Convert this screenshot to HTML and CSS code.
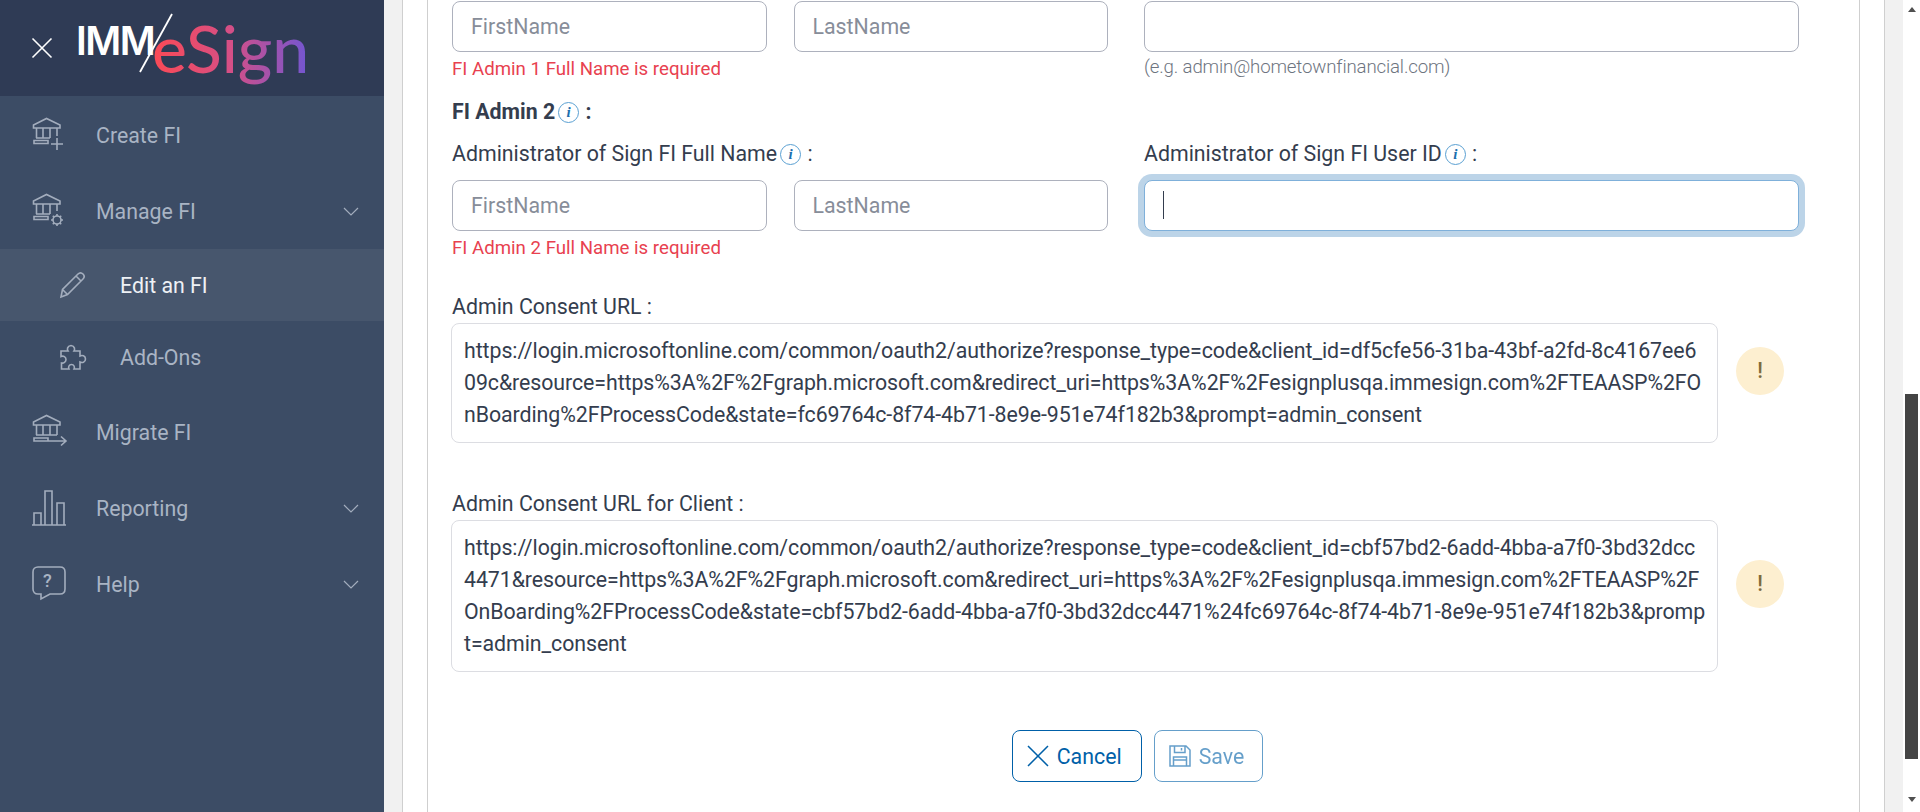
FILE: index.html
```html
<!DOCTYPE html>
<html>
<head>
  <title>Edit an FI | IMM eSign</title>
  <meta charset="utf-8">
  <link rel="stylesheet" href="styles.css">
</head>
<body>
  <div class="sidebar">
    <div class="brand">
      <svg class="brand-close" width="22" height="22" viewBox="0 0 22 22"><path d="M1.5 1.5L20.5 20.5M20.5 1.5L1.5 20.5"/></svg>
      <div class="logo">
        <span class="logo-imm">IMM</span>
        <svg class="logo-slash" width="36" height="60" viewBox="0 0 36 60"><path d="M34 1L2 59"/></svg>
        <span class="logo-esign">eSign</span>
      </div>
    </div>
    <ul class="nav">
      <li class="nav-item">
        <svg class="nav-icon" width="36" height="36" viewBox="0 0 36 36"><path d="M1.5 11V8L14.5 1.5 28 8V11ZM4.5 11V21M11 11V21M18 11V21M25 11V19M4 21H18M2 23.5H16V26.5H2ZM25 21V33M19 27H31"/></svg>
        <span>Create FI</span>
      </li>
      <li class="nav-item">
        <svg class="nav-icon" width="36" height="36" viewBox="0 0 36 36"><path d="M1.5 11V8L14.5 1.5 28 8V11ZM4.5 11V21M11 11V21M18 11V21M25 11V18M4 21H18M2 23.5H16V26.5H2Z"/><circle cx="25" cy="27" r="4"/><path d="M25 21V23M25 31V33M19 27H21M29 27H31M20.8 22.8L22.2 24.2M27.8 29.8L29.2 31.2M20.8 31.2L22.2 29.8M27.8 24.2L29.2 22.8"/></svg>
        <span>Manage FI</span>
        <svg class="chev" width="16" height="9" viewBox="0 0 16 9"><path d="M1 1L8 8 15 1"/></svg>
      </li>
      <li class="nav-item sub active">
        <svg class="nav-icon" width="28" height="28" viewBox="0 0 28 28"><path d="M2 26L3.500 18.500 19 3C20.500 1.500 22.500 1.500 24 3 25.500 4.500 25.500 6.500 24 8L8.500 23.500ZM3.500 18.500L8.500 23.500M17 5L22 10"/></svg>
        <span>Edit an FI</span>
      </li>
      <li class="nav-item sub">
        <svg class="nav-icon" width="28" height="28" viewBox="0 0 28 28"><path d="M2 8H9C8 6.500 8 3 12 2.500 16 3 16 6.500 15 8H21V13C23 12 26.500 12.500 26.500 16 26.500 19.500 23 20 21 19V26H15C16 24 15 21.500 12.500 21.500 10 21.500 9 24 10 26H2.500V20C4.500 20.500 7 19 7 16.500 7 14 4.500 12.500 2 13.500Z"/></svg>
        <span>Add-Ons</span>
      </li>
      <li class="nav-item">
        <svg class="nav-icon" width="36" height="36" viewBox="0 0 36 36"><path d="M1.500 11V8L14.500 1.500 28 8V11ZM4.500 11V21M11 11V21M18 11V21M25 11V21M4 21H25M2 24H16V27H2ZM2 27H34M29 22.500L34 27 29 31.500"/></svg>
        <span>Migrate FI</span>
      </li>
      <li class="nav-item">
        <svg class="nav-icon" width="36" height="36" viewBox="0 0 36 36"><path d="M0 35H34M2 34.500V23H9V34.500M13 34.500V1H20V34.500M25 34.500V13H32V34.500"/></svg>
        <span>Reporting</span>
        <svg class="chev" width="16" height="9" viewBox="0 0 16 9"><path d="M1 1L8 8 15 1"/></svg>
      </li>
      <li class="nav-item">
        <svg class="nav-icon" width="36" height="36" viewBox="0 0 36 36"><path d="M6 1H28C31 1 33 3 33 6V23C33 26 31 28 28 28H18L9 33V28H6C3 28 1 26 1 23V6C1 3 3 1 6 1Z"/></svg>
        <b class="help-mark">?</b>
        <span>Help</span>
        <svg class="chev" width="16" height="9" viewBox="0 0 16 9"><path d="M1 1L8 8 15 1"/></svg>
      </li>
    </ul>
  </div>

  <div class="main">
    <div class="outer-panel">
      <div class="form">
        <div class="name-row">
          <div class="col-left">
            <div class="name-inputs">
              <input class="field" type="text" placeholder="FirstName">
              <input class="field" type="text" placeholder="LastName">
            </div>
            <p class="error">FI Admin 1 Full Name is required</p>
          </div>
          <div class="col-right">
            <input class="field" type="text">
            <p class="hint">(e.g. admin@hometownfinancial.com)</p>
          </div>
        </div>

        <p class="group-title">FI Admin 2<i class="info">i</i> :</p>

        <div class="name-row">
          <div class="col-left">
            <p class="label">Administrator of Sign FI Full Name<i class="info">i</i> :</p>
            <div class="name-inputs">
              <input class="field" type="text" placeholder="FirstName">
              <input class="field" type="text" placeholder="LastName">
            </div>
            <p class="error">FI Admin 2 Full Name is required</p>
          </div>
          <div class="col-right">
            <p class="label">Administrator of Sign FI User ID<i class="info">i</i> :</p>
            <div class="focus-wrap">
              <input class="field is-focus" type="text">
              <span class="caret"></span>
            </div>
          </div>
        </div>

        <p class="label consent-label">Admin Consent URL :</p>
        <div class="url-row">
          <div class="url-box">https://login.microsoftonline.com/common/oauth2/authorize?response_type=code&amp;client_id=df5cfe56-31ba-43bf-a2fd-8c4167ee6<br>09c&amp;resource=https%3A%2F%2Fgraph.microsoft.com&amp;redirect_uri=https%3A%2F%2Fesignplusqa.immesign.com%2FTEAASP%2FO<br>nBoarding%2FProcessCode&amp;state=fc69764c-8f74-4b71-8e9e-951e74f182b3&amp;prompt=admin_consent</div>
          <span class="warn">!</span>
        </div>

        <p class="label client-label">Admin Consent URL for Client :</p>
        <div class="url-row">
          <div class="url-box">https://login.microsoftonline.com/common/oauth2/authorize?response_type=code&amp;client_id=cbf57bd2-6add-4bba-a7f0-3bd32dcc<br>4471&amp;resource=https%3A%2F%2Fgraph.microsoft.com&amp;redirect_uri=https%3A%2F%2Fesignplusqa.immesign.com%2FTEAASP%2F<br>OnBoarding%2FProcessCode&amp;state=cbf57bd2-6add-4bba-a7f0-3bd32dcc4471%24fc69764c-8f74-4b71-8e9e-951e74f182b3&amp;promp<br>t=admin_consent</div>
          <span class="warn">!</span>
        </div>

        <div class="actions">
          <button class="btn">
            <svg width="22" height="22" viewBox="0 0 22 22"><path d="M1 1L21 21M21 1L1 21"/></svg>
            Cancel
          </button>
          <button class="btn btn-disabled">
            <svg width="22" height="22" viewBox="0 0 22 22"><path d="M1 1H17L21 5V21H1ZM5.500 1V7.500H16V1M12.500 3V5.500M4.500 21V12H17.500V21M4.500 15H17.500"/></svg>
            Save
          </button>
        </div>
      </div>
    </div>
  </div>

  <div class="scrollbar">
    <span class="arrow-up"></span>
    <span class="thumb"></span>
    <span class="arrow-down"></span>
  </div>
</body>
</html>
```

FILE: styles.css
```css
* {
  box-sizing: border-box;
}
html, body {
  height: 100%;
}
body {
  margin: 0;
  display: flex;
  height: 812px;
  overflow: hidden;
  background-color: #fff;
  color: #343d4e;
  font-family: Roboto, "Liberation Sans", sans-serif;
  font-size: 16pt;
}
p {
  margin: 0;
}

/* sidebar */
.sidebar {
  width: 384px;
  flex: none;
  background-color: #3c4c65;
}
.brand {
  height: 96px;
  display: flex;
  align-items: center;
  background-color: #2f3b55;
  padding-left: 31px;
}
.brand-close {
  fill: none;
  stroke: #fff;
  stroke-width: 1.6;
}
.logo {
  display: flex;
  align-items: center;
  margin-left: 23px;
  height: 96px;
  position: relative;
}
.logo-imm {
  width: 78px;
  color: #fff;
  font-family: Inter, sans-serif;
  font-weight: 600;
  font-size: 39px;
  letter-spacing: -1.500px;
  margin-top: -15px;
}
.logo-slash {
  position: absolute;
  left: 62px;
  top: 13px;
  fill: none;
  stroke: #fff;
  stroke-width: 1.8;
}
.logo-esign {
  margin-left: -2px;
  font-family: Lato, sans-serif;
  font-weight: 500;
  font-size: 66px;
  line-height: 84px;
  background: linear-gradient(90deg, #fb4a55 0%, #d54f86 50%, #7156d2 100%);
  -webkit-background-clip: text;
  background-clip: text;
  color: transparent;
}
.nav {
  list-style: none;
  margin: 0;
  padding: 1px 0 0;
}
.nav-item {
  position: relative;
  display: flex;
  align-items: center;
  height: 76px;
  padding-left: 32px;
  color: #a9b4c4;
}
.nav-item.sub {
  height: 72px;
  padding-left: 59px;
}
.nav-item.sub + .nav-item:not(.sub) {
  margin-top: 1px;
}
.nav-item.active {
  background-color: #47566d;
  color: #eef1f5;
}
.nav-icon {
  flex: none;
  margin-right: 28px;
  fill: none;
  stroke: #a3adbd;
  stroke-width: 1.6;
}
.nav-item.sub .nav-icon {
  margin-right: 33px;
}
.chev {
  position: absolute;
  right: 25px;
  top: 34px;
  fill: none;
  stroke: #a3adbd;
  stroke-width: 1.2;
}
.help-mark {
  position: absolute;
  left: 43px;
  top: 24px;
  font-size: 18px;
  font-weight: 500;
}

/* main area */
.main {
  flex: 1;
  background-color: #f1f1f1;
  padding: 0 18px;
}
.outer-panel {
  height: 100%;
  background-color: #fff;
  border-left: 1px solid #cfcfcf;
  border-right: 1px solid #cfcfcf;
  padding: 0 24px;
}
.form {
  height: 100%;
  border-left: 1px solid #cfcfcf;
  border-right: 1px solid #cfcfcf;
  padding: 1px 36px 0 24px;
}
.name-row {
  display: flex;
  gap: 36px;
}
.col-left {
  width: 656px;
  flex: none;
}
.col-right {
  width: 655px;
  flex: none;
}
.name-inputs {
  display: flex;
  gap: 27px;
}
.field {
  display: block;
  width: 100%;
  min-width: 0;
  height: 51px;
  border: 1px solid #adb1bd;
  border-radius: 8px;
  padding: 0 18px;
  font: inherit;
  color: inherit;
  outline: none;
  background: #fff;
}
.field::placeholder {
  color: #878d99;
}
.is-focus {
  border-color: #7fb0da;
  box-shadow: 0 0 0 6px #bcd4e8;
}
.focus-wrap {
  position: relative;
}
.caret {
  position: absolute;
  left: 19px;
  top: 11px;
  width: 1px;
  height: 28px;
  background-color: #343d4e;
}
.error {
  margin-top: 5px;
  line-height: 24px;
  color: #e8414f;
  font-size: 14pt;
}
.hint {
  margin-top: 3px;
  line-height: 24px;
  color: #6d7480;
  font-size: 14pt;
  font-weight: 300;
  letter-spacing: -0.150px;
}
.group-title {
  margin-top: 17px;
  line-height: 28px;
  font-weight: 700;
}
.label {
  line-height: 28px;
}
.name-row .label {
  margin-top: 14px;
  margin-bottom: 12px;
}
.info {
  display: inline-block;
  width: 21px;
  height: 21px;
  margin: 0 1px 0 3px;
  border: 1px solid #5aa0d2;
  border-radius: 50%;
  color: #1c6fae;
  font-family: "Liberation Serif", serif;
  font-size: 15px;
  font-weight: 700;
  line-height: 19px;
  text-align: center;
  vertical-align: 2px;
}
.consent-label {
  margin-top: 33px;
  margin-bottom: 2px;
}
.client-label {
  margin-top: 47px;
  margin-bottom: 2px;
}
.url-row {
  display: flex;
  align-items: center;
  gap: 18px;
  margin-left: -1px;
}
.url-box {
  width: 1267px;
  flex: none;
  padding: 11px 10px 11px 12px;
  border: 1px solid #dcdde2;
  border-radius: 8px;
  line-height: 32px;
  letter-spacing: -0.070px;
  white-space: nowrap;
}
.warn {
  width: 48px;
  height: 48px;
  flex: none;
  margin-bottom: 24px;
  border-radius: 50%;
  background-color: #fdefd0;
  color: #7d6a3c;
  text-align: center;
  line-height: 48px;
  font-weight: 500;
}
.actions {
  display: flex;
  justify-content: center;
  gap: 12px;
  margin-top: 58px;
}
.btn {
  display: flex;
  align-items: center;
  gap: 8px;
  height: 52px;
  padding: 0 19px 0 14px;
  background: #fff;
  border: 1px solid #0060a8;
  border-radius: 8px;
  color: #0060a8;
  font: inherit;
}
.btn svg {
  fill: none;
  stroke: currentColor;
  stroke-width: 1.5;
}
.btn-disabled {
  padding-right: 18px;
  opacity: .6;
}

/* page scrollbar */
.scrollbar {
  width: 17px;
  flex: none;
  display: flex;
  flex-direction: column;
  align-items: center;
  padding: 7px 0;
  background-color: #fff;
}
.arrow-up {
  border: 4px solid transparent;
  border-top: 0;
  border-bottom: 5px solid #505050;
}
.arrow-down {
  margin-top: 38px;
  border: 4px solid transparent;
  border-bottom: 0;
  border-top: 5px solid #505050;
}
.thumb {
  width: 13px;
  height: 365px;
  margin-top: 382px;
  background-color: #444;
}
```
